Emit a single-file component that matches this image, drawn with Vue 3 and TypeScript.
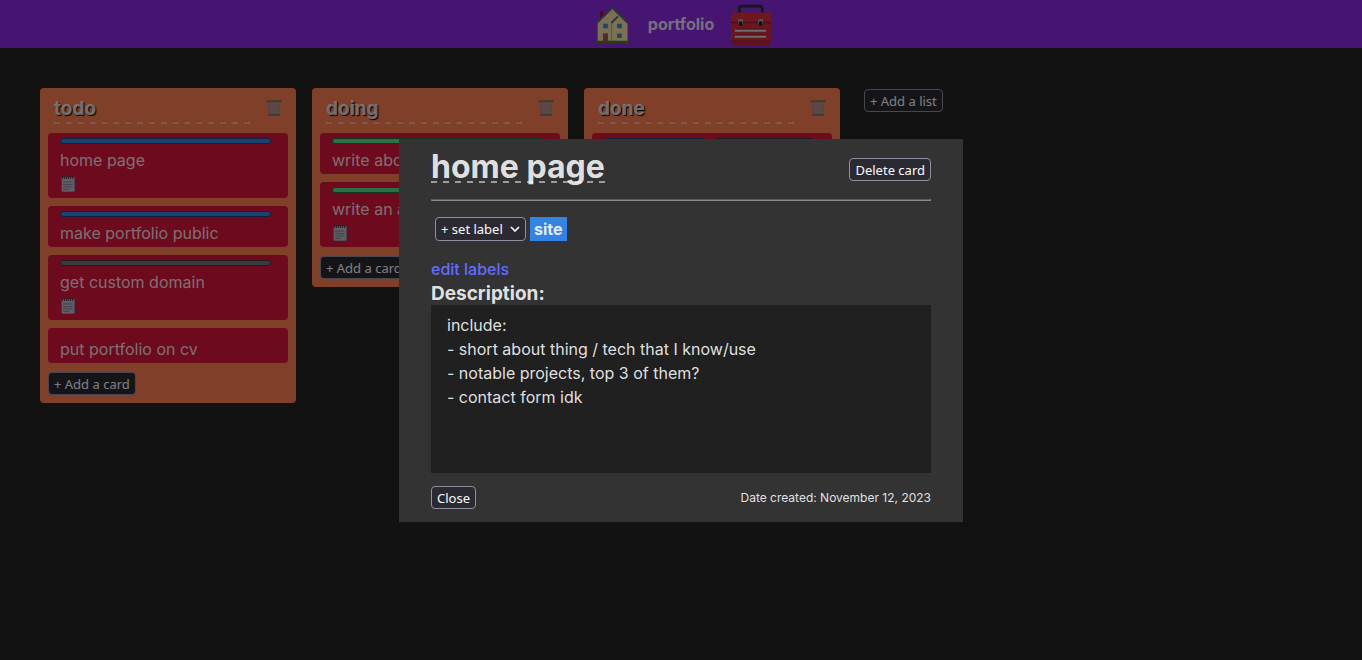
<script setup lang="ts">
import { ref } from 'vue'

interface Card {
  title: string
  labels: string[]
  note: boolean
}

interface List {
  title: string
  cards: Card[]
}

const lists: List[] = [
  {
    title: 'todo',
    cards: [
      { title: 'home page', labels: ['blue'], note: true },
      { title: 'make portfolio public', labels: ['blue'], note: false },
      { title: 'get custom domain', labels: ['gray'], note: true },
      { title: 'put portfolio on cv', labels: [], note: false },
    ],
  },
  {
    title: 'doing',
    cards: [
      { title: 'write about', labels: ['green'], note: false },
      { title: 'write an a', labels: ['green'], note: true },
    ],
  },
  {
    title: 'done',
    cards: [{ title: '', labels: ['blue', 'gray'], note: false }],
  },
]

const label = ref('')
const description = ref(
  [
    'include:',
    '- short about thing / tech that I know/use',
    '- notable projects, top 3 of them?',
    '- contact form idk',
  ].join('\n'),
)
</script>

<template>
  <div class="page">
    <header class="topbar">
      <svg class="logo" viewBox="27 10 126 123" aria-hidden="true">
        <rect x="57" y="33" width="10" height="28" fill="#a01030" />
        <path d="M50 66 L94 22 L139 68 V121 H50 Z" fill="#f5deab" />
        <path d="M92 68 L114 47 L139 70 V121 H92 Z" fill="#f9e2a4" />
        <path d="M92 68 V121" stroke="#d8a860" stroke-width="3" />
        <path d="M47 67 L94 21 L141 67" fill="none" stroke="#5e6870" stroke-width="6" />
        <path d="M91 67 L111 47" stroke="#5e6870" stroke-width="6" />
        <g fill="#3a8fc8" stroke="#d8d0b8" stroke-width="1">
          <rect x="66" y="69" width="15" height="14" />
          <rect x="108" y="69" width="15" height="14" />
          <rect x="108" y="98" width="15" height="14" />
        </g>
        <rect x="66" y="98" width="15" height="23" fill="#a05c46" />
        <rect x="42" y="120" width="103" height="10" rx="3" fill="#4c7a26" />
      </svg>
      <h1 class="board-name">portfolio</h1>
      <svg class="logo" viewBox="450 10 126 123" aria-hidden="true">
        <path d="M478 36 V24 Q478 17 485 17 H540 Q547 17 547 24 V36" fill="none" stroke="#2b3338" stroke-width="9" />
        <rect x="453" y="36" width="120" height="96" rx="9" fill="#d32f3f" />
        <rect x="453" y="36" width="120" height="29" rx="9" fill="#d9303c" />
        <rect x="453" y="63" width="120" height="5" fill="#a51f2e" />
        <path d="M453 118 H573 V124 Q573 132 564 132 H462 Q453 132 453 124 Z" fill="#bb2434" />
        <g fill="#a9b4ba">
          <rect x="475" y="56" width="14" height="14" rx="4" />
          <rect x="535" y="56" width="14" height="14" rx="4" />
        </g>
        <g fill="#20282c">
          <rect x="477" y="62" width="10" height="14" rx="3" />
          <rect x="537" y="62" width="10" height="14" rx="3" />
        </g>
        <g fill="#7e2330">
          <rect x="465" y="84" width="93" height="4" />
          <rect x="465" y="102" width="93" height="4" />
        </g>
        <g fill="#dde3e8">
          <rect x="465" y="87" width="93" height="6" />
          <rect x="465" y="105" width="93" height="6" />
        </g>
      </svg>
    </header>

    <main class="board">
      <section v-for="list in lists" :key="list.title" class="list">
        <div class="list-head">
          <h2 class="list-title">{{ list.title }}</h2>
          <button class="trash" type="button" :aria-label="'Delete ' + list.title">
            <svg viewBox="0 0 48 50" aria-hidden="true">
              <path d="M4 6 H44 L38 44 H10 Z" fill="#9a8f8c" fill-opacity=".6" />
              <path d="M8 8 L34 44 M20 8 L37 34 M32 8 L40 20 M40 8 L14 44 M28 8 L11 34 M16 8 L8 20" fill="none" stroke="#a5a3a3" stroke-width="3" />
              <path d="M5 7 L11 44 M43 7 L37 44" stroke="#97918f" stroke-width="3" />
              <rect x="0" y="1" width="48" height="6" rx="1" fill="#747678" />
              <rect x="5" y="43" width="38" height="6" rx="1" fill="#747678" />
            </svg>
          </button>
        </div>
        <article v-for="(card, i) in list.cards" :key="i" class="card">
          <div class="bars">
            <span v-for="color in card.labels" :key="color" class="bar" :class="color"></span>
          </div>
          <p class="card-title">{{ card.title }}</p>
          <div v-if="card.note" class="note">
            <svg viewBox="0 0 42 48" aria-hidden="true">
              <rect x="1" y="3" width="41" height="45" rx="4" fill="#8f8ba6" />
              <rect x="3" y="4" width="36" height="42" rx="3" fill="#c2bfcb" />
              <path d="M6 18 H35 M6 26 H35 M6 33 H35 M6 40 H24" stroke="#85809a" stroke-width="3" />
              <path d="M5 1 V9 M11 1 V9 M17 1 V9 M23 1 V9 M29 1 V9 M35 1 V9" stroke="#3f3b4a" stroke-width="3" />
            </svg>
          </div>
        </article>
        <button class="btn add-card" type="button">+ Add a card</button>
      </section>
      <button class="btn add-list" type="button">+ Add a list</button>
    </main>

    <div class="backdrop">
      <div class="dialog" role="dialog" aria-modal="true" aria-labelledby="card-name">
        <div class="dialog-head">
          <h2 id="card-name" class="dialog-title">home page</h2>
          <button class="btn" type="button">Delete card</button>
        </div>
        <hr class="rule" />
        <div class="labels">
          <span class="select-wrap">
            <select v-model="label" class="btn select" aria-label="set label">
              <option value="">+ set label</option>
            </select>
            <svg class="chevron" viewBox="0 0 10 6" aria-hidden="true">
              <path d="M1 1 L5 5 L9 1" fill="none" stroke="#fbfbfe" stroke-width="1.6" />
            </svg>
          </span>
          <span class="tag">site</span>
        </div>
        <a class="edit" href="#labels">edit labels</a>
        <label class="desc-label" for="description">Description:</label>
        <textarea id="description" v-model="description" class="desc" rows="7" spellcheck="false"></textarea>
        <div class="dialog-foot">
          <button class="btn" type="button">Close</button>
          <span class="date">Date created: November 12, 2023</span>
        </div>
      </div>
    </div>
  </div>
</template>

<style>
body {
  margin: 0;
  background: #242424;
}
</style>

<style scoped>
.page {
  min-height: 100vh;
  box-sizing: border-box;
  font: 400 16px/24px Inter, sans-serif;
  color: rgba(255, 255, 255, 0.87);
}

.page * {
  box-sizing: border-box;
}

h1,
h2,
p {
  margin: 0;
}

.topbar {
  display: flex;
  align-items: center;
  justify-content: center;
  gap: 16px;
  height: 48px;
  background: #8a2be2;
}

.logo {
  width: 42px;
  height: 41px;
}

.board-name {
  font-size: 16px;
  font-weight: 700;
}

.board {
  display: flex;
  align-items: flex-start;
  gap: 16px;
  padding: 40px;
}

.list {
  display: flex;
  flex-direction: column;
  gap: 8px;
  width: 256px;
  padding: 8px;
  border-radius: 4px;
  background: #ff7f50;
}

.list-head {
  display: flex;
  align-items: flex-start;
  justify-content: space-between;
  height: 29px;
  padding: 0 6px;
}

.list-title {
  width: 202px;
  height: 28px;
  font-size: 19px;
  line-height: 26px;
  font-weight: 700;
  text-shadow: 1px 1px 1px #000;
  background: linear-gradient(to right, rgba(255, 255, 255, 0.4) 6px, transparent 6px) left bottom / 12px 2px round no-repeat;
}

.trash {
  display: flex;
  flex: none;
  width: 16px;
  margin-top: 4px;
  padding: 0;
  border: 0;
  background: none;
}

.trash svg {
  width: 16px;
  height: 16px;
}

.card {
  padding: 5px 12px 2px;
  border-radius: 4px;
  background: #dc143c;
}

.bars {
  display: flex;
  gap: 8px;
  margin: 0 5px 4px 0;
}

.bar {
  flex: 1;
  height: 6px;
  border: 1px solid;
  border-radius: 4px;
}

.blue {
  background: #3584e4;
  border-color: #1b4682;
}

.green {
  background: #57e389;
  border-color: #23703e;
}

.gray {
  background: #77767b;
  border-color: #3a3a3d;
}

.card-title {
  min-height: 24px;
}

.note {
  display: flex;
  align-items: center;
  height: 24px;
}

.note svg {
  width: 16px;
  height: 16px;
}

.btn {
  height: 23px;
  padding: 1px 5px 0;
  border: 1px solid #8f8f9d;
  border-radius: 4px;
  background: #2b2a33;
  color: #fbfbfe;
  font: 400 13px/20px "Noto Sans", sans-serif;
  white-space: nowrap;
}

.add-card {
  align-self: flex-start;
  margin-top: 1px;
}

.add-list {
  margin: 1px 0 0 8px;
}

.backdrop {
  position: fixed;
  inset: 0;
  display: flex;
  align-items: center;
  justify-content: center;
  background: rgba(0, 0, 0, 0.5);
}

.dialog {
  display: flex;
  flex-direction: column;
  width: 564px;
  max-width: 100%;
  padding: 8px 32px 12px;
  background: #333;
}

.dialog-head {
  display: flex;
  align-items: center;
  justify-content: space-between;
  height: 44px;
}

.dialog-head .btn {
  margin-top: 2px;
}

.dialog-title {
  height: 36px;
  margin-bottom: 8px;
  font-size: 32px;
  line-height: 40px;
  font-weight: 700;
  background: linear-gradient(to right, #9c9c9c 6px, transparent 6px) left bottom / 12px 2px repeat-x;
}

.rule {
  width: 100%;
  height: 2px;
  margin: 8px 0 16px;
  border: 1px solid;
  border-color: #5c5c5c #8a8a8a #8a8a8a #5c5c5c;
}

.labels {
  display: flex;
  gap: 4px;
  padding-left: 4px;
}

.select-wrap {
  position: relative;
}

.select {
  appearance: none;
  display: block;
  width: 91px;
  height: 24px;
}

.chevron {
  position: absolute;
  top: 9px;
  right: 6px;
  width: 10px;
  height: 6px;
}

.tag {
  padding: 0 4px;
  background: #3584e4;
  font-weight: 700;
}

.edit {
  align-self: flex-start;
  margin-top: 16px;
  color: #646cff;
  font-weight: 500;
  text-decoration: none;
}

.desc-label {
  height: 24px;
  font-size: 19px;
  line-height: 26px;
  font-weight: 700;
}

.desc {
  display: block;
  width: 100%;
  height: 168px;
  padding: 8px 16px;
  border: 0;
  border-radius: 0;
  background: #202020;
  color: inherit;
  font: inherit;
  resize: none;
  outline: 0;
}

.dialog-foot {
  display: flex;
  align-items: center;
  justify-content: space-between;
  margin-top: 13px;
}

.date {
  font-size: 12px;
}
</style>
